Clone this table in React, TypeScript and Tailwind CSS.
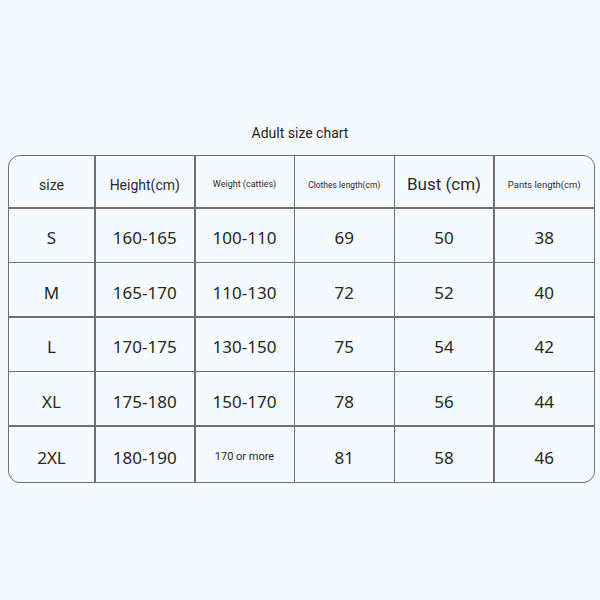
const headers = [
  { label: "size", cls: "text-[14px]" },
  { label: "Height(cm)", cls: "text-[14px]" },
  { label: "Weight (catties)", cls: "text-[9px]" },
  { label: "Clothes length(cm)", cls: "text-[8.5px]" },
  { label: "Bust (cm)", cls: "text-[17px]" },
  { label: "Pants length(cm)", cls: "text-[9.5px]" },
];

const rows = [
  ["S", "160-165", "100-110", "69", "50", "38"],
  ["M", "165-170", "110-130", "72", "52", "40"],
  ["L", "170-175", "130-150", "75", "54", "42"],
  ["XL", "175-180", "150-170", "78", "56", "44"],
  ["2XL", "180-190", "170 or more", "81", "58", "46"],
];

export default function App() {
  return (
    <div className="flex h-[600px] w-[600px] flex-col items-center bg-[#f5faff] pt-[123px] text-[#222]">
      <div className="mb-[12px] font-['Roboto',sans-serif] text-[14px] leading-[20px] text-[#1e1e1e]">
        Adult size chart
      </div>

      <div className="ml-[8px] mr-auto grid w-[587px] grid-cols-[85px_98.5px_98px_98.5px_98px_1fr] grid-rows-[51px_53px_53px_53px_53px_55.5px] gap-[1.5px] overflow-hidden rounded-[12px] border-[1.5px] border-[#6f6f6f] bg-[#6f6f6f]">
        {headers.map((h) => (
          <div
            key={h.label}
            className={`flex items-center justify-center bg-[#f5faff] pt-[7px] font-['Roboto',sans-serif] text-[#2a2a2a] ${h.cls}`}
          >
            {h.label}
          </div>
        ))}
        {rows.map((r) =>
          r.map((v, i) => (
            <div
              key={r[0] + i}
              className={`flex items-center justify-center bg-[#f5faff] pt-[6px] text-[#262626] ${
                v === "170 or more"
                  ? "font-['Roboto',sans-serif] text-[11px]"
                  : "font-['Noto_Sans',sans-serif] text-[17px]"
              }`}
            >
              {v}
            </div>
          ))
        )}
      </div>
    </div>
  );
}
